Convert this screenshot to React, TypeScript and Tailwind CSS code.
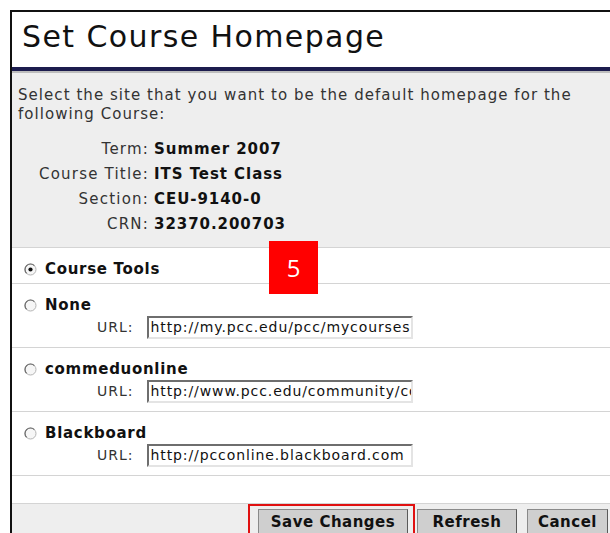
import React from 'react';

interface SiteOption {
  id: string;
  label: string;
  url?: string;
}

const courseInfo: [string, string][] = [
  ['Term:', 'Summer 2007'],
  ['Course Title:', 'ITS Test Class'],
  ['Section:', 'CEU-9140-0'],
  ['CRN:', '32370.200703'],
];

const sites: SiteOption[] = [
  { id: 'tools', label: 'Course Tools' },
  { id: 'none', label: 'None', url: 'http://my.pcc.edu/pcc/mycourses' },
  { id: 'commed', label: 'commeduonline', url: 'http://www.pcc.edu/community/commeduonline' },
  { id: 'bb', label: 'Blackboard', url: 'http://pcconline.blackboard.com' },
];

function Radio({ checked }: { checked: boolean }) {
  return (
    <svg width="13" height="13" viewBox="0 0 13 13" className="shrink-0">
      <circle cx="6.5" cy="6.5" r="5.5" fill="#f6f6f6" stroke="#b4b4b4" strokeWidth="1" />
      <path d="M2.6 10.4 A5.5 5.5 0 0 1 10.4 2.6" fill="none" stroke="#6a6a6a" strokeWidth="1.2" />
      {checked && <circle cx="6.5" cy="6.5" r="2.1" fill="#111" />}
    </svg>
  );
}

function Button({ children, width }: { children: React.ReactNode; width: string }) {
  return (
    <button
      className={`${width} h-[26px] bg-[#cfcfcf] border border-[#8a8a8a] border-b-[#5a5a5a] border-r-[#5a5a5a] font-bold text-[15px] tracking-[0.5px] text-[#111] leading-none`}
    >
      {children}
    </button>
  );
}

export default function App() {
  const selected = 'tools';

  return (
    <div className="relative h-[533px] overflow-hidden bg-white pl-[10px] pt-[10px] font-['DejaVu_Sans','Verdana',sans-serif] text-[#222]">
      <div className="border-l-2 border-t-2 border-[#111]">
        {/* Title */}
        <div className="pl-[10px] pt-[10px] pb-[15px]">
          <h1 className="text-[30px] leading-[30px] tracking-[1.4px] text-[#111]">Set Course Homepage</h1>
        </div>
        <div className="h-[4px] bg-[#1c1c4e]" />
        <div className="h-[2px] bg-[#bdbdbd]" />

        {/* Course details */}
        <div className="bg-[#eeeeee] pl-[6px] pt-[13px] pb-[10px] border-b border-[#d4d4d4]">
          <p className="text-[15px] leading-[19px] tracking-[1.05px] text-[#333] pr-[14px]">
            Select the site that you want to be the default homepage for the following Course:
          </p>
          <div className="mt-[13px] flex flex-col">
            {courseInfo.map(([label, value]) => (
              <div key={label} className="flex items-center gap-[5px] h-[25px] text-[15px]">
                <span className="w-[131px] text-right text-[#333] tracking-[1.2px]">{label}</span>
                <span className="font-bold text-[#111] tracking-[0.95px]">{value}</span>
              </div>
            ))}
          </div>
        </div>

        {/* Site options */}
        {sites.map((site) => (
          <div
            key={site.id}
            className={`border-b border-[#d4d4d4] pl-[12px] pt-[12px] ${site.url ? 'pb-[8px]' : 'pb-[5px]'}`}
          >
            <label className="flex items-center gap-[8px] h-[18px]">
              <Radio checked={site.id === selected} />
              <span className="font-bold text-[15px] tracking-[0.7px] text-[#111]">{site.label}</span>
            </label>
            {site.url && (
              <div className="flex items-center gap-[13px] mt-[2px] pl-[73px]">
                <span className="text-[14px] tracking-[1px] text-[#333]">URL:</span>
                <div className="w-[266px] h-[23px] bg-white border-2 border-t-[#6e6e6e] border-l-[#6e6e6e] border-b-[#e4e4e4] border-r-[#e4e4e4] overflow-hidden">
                  <span className="block whitespace-nowrap text-[14px] leading-[19px] tracking-[0.9px] pl-[2px] text-[#111]">
                    {site.url}
                  </span>
                </div>
              </div>
            )}
          </div>
        ))}

        <div className="h-[28px] border-b border-[#d4d4d4]" />

        {/* Actions */}
        <div className="bg-[#eeeeee] h-[40px] flex justify-end items-start pr-[2px]">
          <div className="border-2 border-[#e01010] pl-[8px] pr-[5px] pt-[3px]">
            <Button width="w-[150px]">Save Changes</Button>
          </div>
          <div className="flex gap-[10px] pt-[5px] ml-[2px]">
            <Button width="w-[100px]">Refresh</Button>
            <Button width="w-[81px]">Cancel</Button>
          </div>
        </div>
      </div>

      {/* Step marker */}
      <div className="absolute left-[269px] top-[241px] w-[49px] h-[53px] bg-[#ff0000] flex items-center justify-center">
        <span className="text-white text-[24px] font-['Open_Sans',sans-serif] leading-none">5</span>
      </div>
    </div>
  );
}
